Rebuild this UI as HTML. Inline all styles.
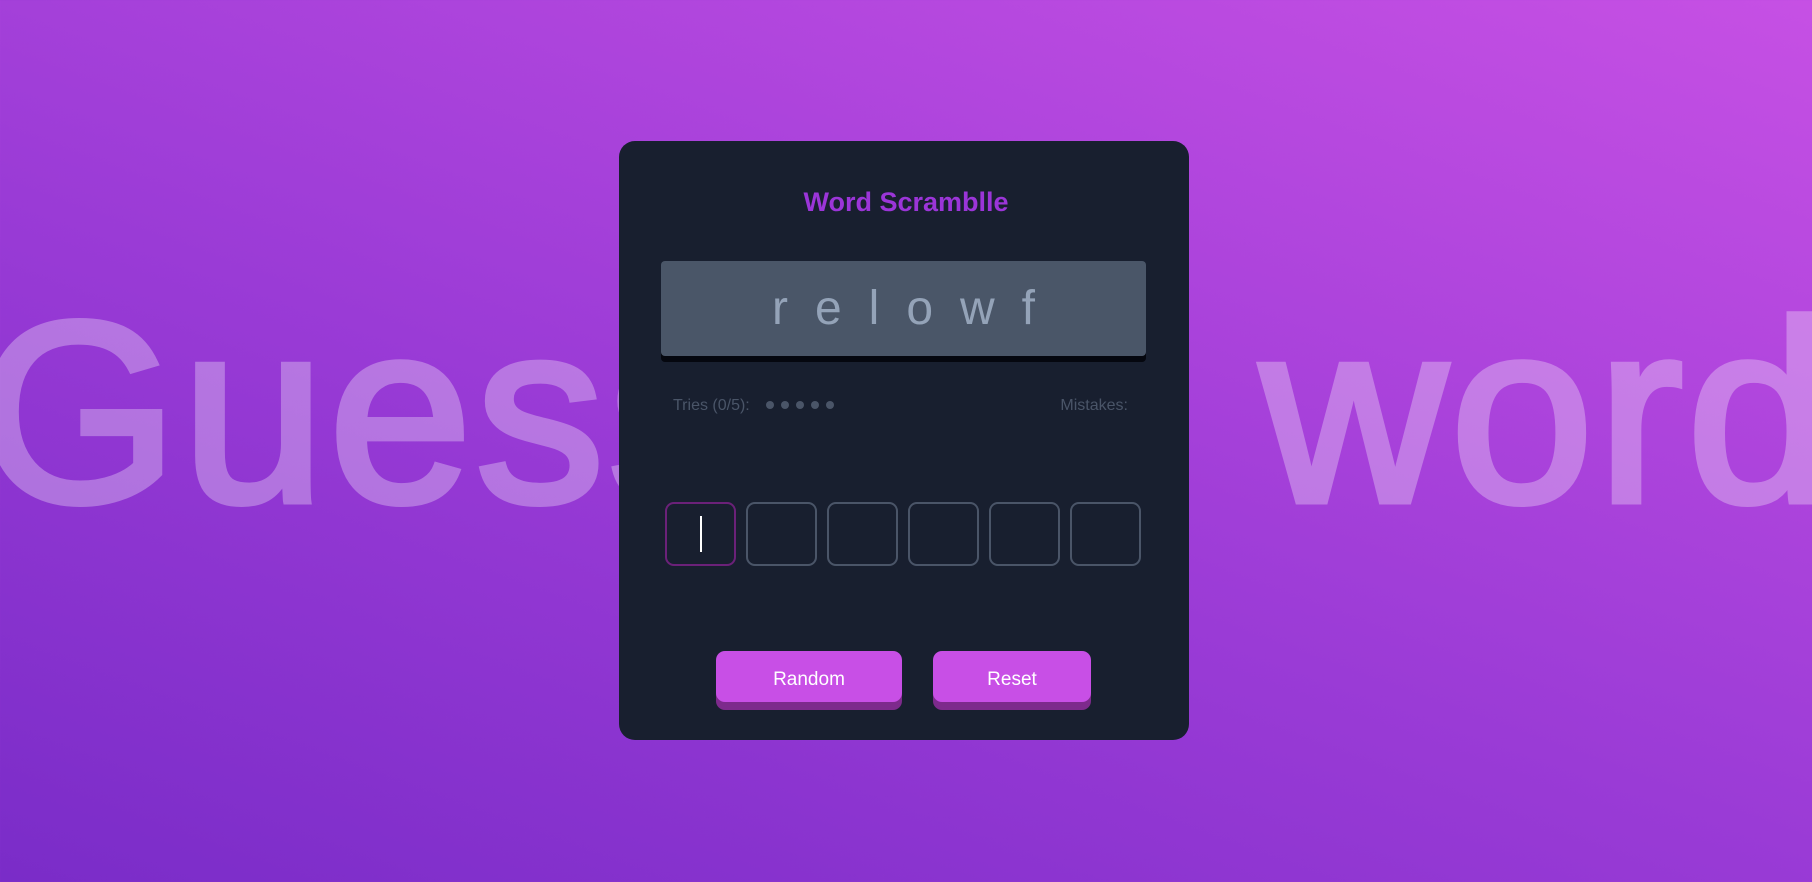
<!DOCTYPE html>
<html><head><meta charset="utf-8"><style>
*{margin:0;padding:0;box-sizing:border-box}
html,body{width:1812px;height:882px;overflow:hidden}
body{background:linear-gradient(20deg,#7a2cc8 0%,#9a3bd6 45%,#c650e4 100%);font-family:"Liberation Sans",sans-serif;position:relative}
.bg{position:absolute;left:-30px;right:-30px;top:243px;text-align:center;white-space:nowrap;font-size:257px;line-height:340px;color:#fff;-webkit-text-stroke:7px #fff;opacity:0.3;letter-spacing:4px}
.card{position:absolute;left:619px;top:141px;width:570px;height:599px;background:#181f2f;border-radius:16px}
.title{position:absolute;left:0;right:0;top:184px;text-align:center;color:#9b35d8;font-weight:bold;font-size:27px;line-height:36px}
.scr{position:absolute;left:661px;top:261px;width:485px;height:95px;background:#4a5668;border-radius:4px;box-shadow:0 6px 0 #05070f;color:#94a3b8;font-size:48px;text-align:center;line-height:95px;letter-spacing:27px;padding-left:27px}
.tries{position:absolute;left:673px;top:396px;font-size:16px;color:#4a5568;line-height:20px}
.dots{display:inline-block;margin-left:12px}
.dots i{display:inline-block;width:8px;height:8px;border-radius:50%;background:#4a5568;margin-right:7px;vertical-align:1px}
.mist{position:absolute;right:684px;top:396px;font-size:16px;color:#4a5568;line-height:20px}
.box{position:absolute;top:502px;width:71px;height:64px;border:2px solid #4a5568;border-radius:9px}
.box.a{border-color:#6b2179}
.caret{position:absolute;left:33px;top:12px;width:2px;height:36px;background:#fff}
.btn{position:absolute;top:651px;height:51px;background:#c84fe6;border-radius:9px;box-shadow:0 8px 0 #7d2a8c;color:#fff;font-size:19px;text-align:center;line-height:58px}
</style></head><body>
<div class="bg">Guess the word</div>
<div class="card"></div>
<div class="title">Word Scramblle</div>
<div class="scr">relowf</div>
<div class="tries">Tries (0/5): <span class="dots"><i></i><i></i><i></i><i></i><i></i></span></div>
<div class="mist">Mistakes:</div>
<div class="box a" style="left:665px"><div class="caret"></div></div>
<div class="box" style="left:746px"></div>
<div class="box" style="left:827px"></div>
<div class="box" style="left:908px"></div>
<div class="box" style="left:989px"></div>
<div class="box" style="left:1070px"></div>
<div class="btn" style="left:716px;width:186px">Random</div>
<div class="btn" style="left:933px;width:158px">Reset</div>
</body></html>
